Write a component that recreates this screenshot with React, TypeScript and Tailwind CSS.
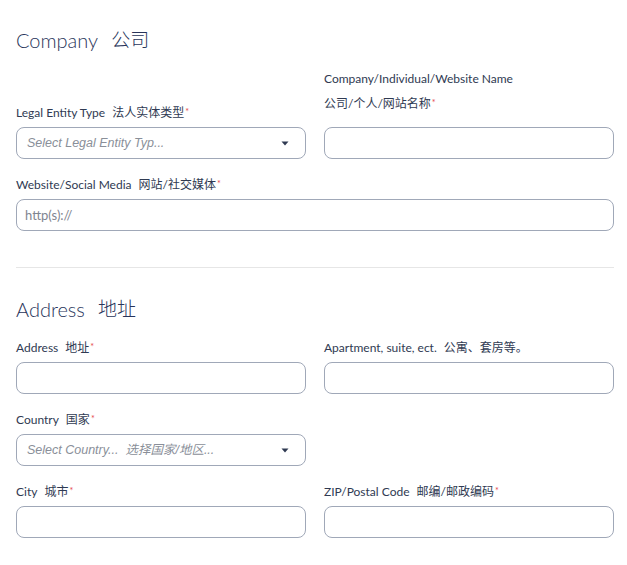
import React from 'react'

const FONT = "font-['Lato','Noto_Sans_CJK_SC',sans-serif]"

function Req() {
  return <span className="text-[9px] text-[#e5484d] align-top relative top-[-1px] ml-[1px]">*</span>
}

function Label({ en, zh, required }: { en: string; zh?: string; required?: boolean }) {
  return (
    <div className="text-[12px] leading-[16px] text-[#2f3a52] mb-[6px] whitespace-nowrap">
      {en}
      {zh && <span className="ml-[7px]">{zh}</span>}
      {required && <Req />}
    </div>
  )
}

function TextInput({ placeholder }: { placeholder?: string }) {
  return (
    <input
      type="text"
      placeholder={placeholder}
      className="w-full h-[32px] px-[8px] border border-[#a0a8b8] rounded-[8px] text-[13px] text-[#2f3a52] placeholder:text-[#7f8590] focus:outline-none bg-white"
    />
  )
}

function SelectBox({ placeholder }: { placeholder: string }) {
  return (
    <div className="w-full h-[32px] pl-[10px] pr-[16px] border border-[#a0a8b8] rounded-[8px] flex items-center justify-between bg-white">
      <span className="font-['Liberation_Sans','Noto_Sans_CJK_SC',sans-serif] italic text-[12.5px] text-[#8a8f99] whitespace-pre">
        {placeholder}
      </span>
      <svg width="8" height="5" viewBox="0 0 8 5" className="ml-2">
        <path d="M0.5 0.5 L7.5 0.5 L4 4.5 Z" fill="#2f3a52" />
      </svg>
    </div>
  )
}

function Heading({ en, zh }: { en: string; zh: string }) {
  return (
    <h2 className="h-[28px] flex items-center text-[20px] font-light text-[#28345a]">
      {en}
      <span className="ml-[13px] text-[19px]">{zh}</span>
    </h2>
  )
}

export default function App() {
  return (
    <div className={`${FONT} bg-white min-h-[565px] pt-[26px] pl-[16px] pr-[13px] pb-[27px]`}>
      <Heading en="Company" zh="公司" />

      <div className="grid grid-cols-2 gap-x-[18px] gap-y-[18px] mt-[17px] items-end">
        <div>
          <Label en="Legal Entity Type" zh="法人实体类型" required />
          <SelectBox placeholder="Select Legal Entity Typ..." />
        </div>
        <div>
          <div className="text-[12px] leading-[16px] text-[#2f3a52]">Company/Individual/Website Name</div>
          <div className="text-[12px] leading-[16px] text-[#2f3a52] mt-[9px] mb-[15px]">
            公司/个人/网站名称<Req />
          </div>
          <TextInput />
        </div>
        <div className="col-span-2">
          <Label en="Website/Social Media" zh="网站/社交媒体" required />
          <TextInput placeholder="http(s)://" />
        </div>
      </div>

      <div className="mt-[36px] h-px bg-[#e6e6e6]" />

      <div className="mt-[27px]">
        <Heading en="Address" zh="地址" />
      </div>

      <div className="grid grid-cols-2 gap-x-[18px] gap-y-[18px] mt-[17px]">
        <div>
          <Label en="Address" zh="地址" required />
          <TextInput />
        </div>
        <div>
          <Label en="Apartment, suite, ect." zh="公寓、套房等。" />
          <TextInput />
        </div>
        <div>
          <Label en="Country" zh="国家" required />
          <SelectBox placeholder="Select Country...  选择国家/地区..." />
        </div>
        <div />
        <div>
          <Label en="City" zh="城市" required />
          <TextInput />
        </div>
        <div>
          <Label en="ZIP/Postal Code" zh="邮编/邮政编码" required />
          <TextInput />
        </div>
      </div>
    </div>
  )
}
